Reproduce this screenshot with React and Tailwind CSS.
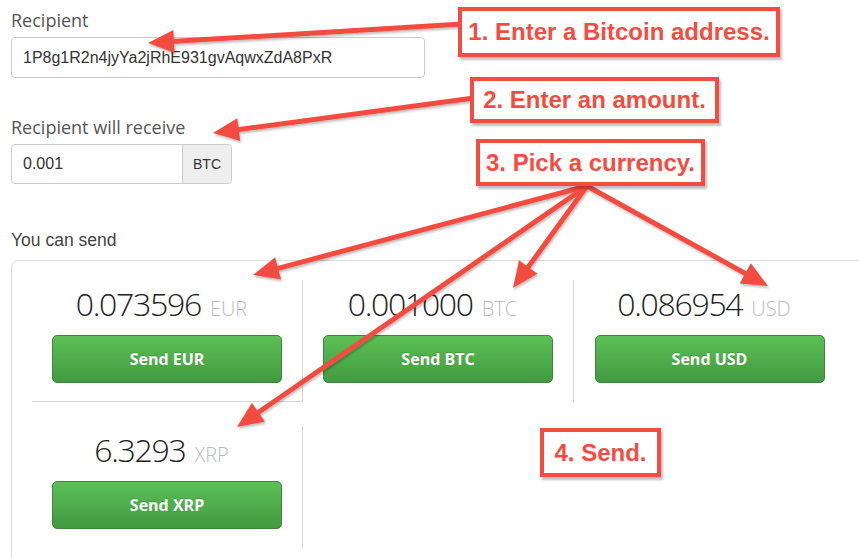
import React from 'react';

const RED = '#f44c40';

const cells = [
  { amount: '0.073596', cur: 'EUR', right: true, bottom: true },
  { amount: '0.001000', cur: 'BTC', right: true },
  { amount: '0.086954', cur: 'USD' },
  { amount: '6.3293', cur: 'XRP', right: true },
];

// arrow line + head, from start point to tip
const Arrow = ({ from, to }) => {
  const dx = to[0] - from[0];
  const dy = to[1] - from[1];
  const len = Math.sqrt(dx * dx + dy * dy);
  const ux = dx / len;
  const uy = dy / len;
  const nx = -uy;
  const ny = ux;
  const bx = to[0] - ux * 26;
  const by = to[1] - uy * 26;
  const pts = [
    [to[0], to[1]],
    [bx + nx * 11.5, by + ny * 11.5],
    [bx - nx * 11.5, by - ny * 11.5],
  ];
  return (
    <g>
      <line x1={from[0]} y1={from[1]} x2={bx + ux * 3} y2={by + uy * 3} stroke={RED} strokeWidth="5" />
      <polygon points={pts.map((p) => p.join(',')).join(' ')} fill={RED} />
    </g>
  );
};

const Callout = ({ className, children }) => (
  <div
    className={`absolute flex items-center justify-center bg-white border-4 border-[#f44c40] shadow-[2px_3px_2px_rgba(0,0,0,0.25)] text-[#f44c40] font-bold text-[24px] leading-none ${className}`}
    style={{ fontFamily: '"Liberation Sans", Arial, sans-serif' }}
  >
    {children}
  </div>
);

const Cell = ({ amount, cur, right, bottom }) => (
  <div
    className={`w-[271px] h-[122px] px-5 pt-[4px] flex flex-col items-center ${right ? 'border-r border-[#d4d4d4]' : ''} ${bottom ? 'border-b border-[#d4d4d4]' : ''}`}
  >
    <div className="h-[40px] leading-[40px] pr-[11px] whitespace-nowrap" style={{ fontFamily: '"Open Sans", sans-serif' }}>
      <span className="text-[32px] font-light tracking-[-1.3px] text-[#222]">{amount}</span>
      <span className="ml-[9px] text-[20px] font-light text-[#bbbbbb]">{cur}</span>
    </div>
    <button
      className="mt-[11px] w-[230px] h-[48px] rounded-[5px] border border-[#3d853a] bg-gradient-to-b from-[#5cc056] to-[#429a40] text-white font-bold text-[16px] [text-shadow:0_-1px_0_rgba(0,0,0,0.15)]"
      style={{ fontFamily: '"Open Sans", sans-serif' }}
    >
      Send {cur}
    </button>
  </div>
);

export default function App() {
  return (
    <div className="relative w-[859px] h-[558px] overflow-hidden bg-white">
      <div className="pl-[11px] pt-[8px]">
        <div className="text-[18px] leading-6 text-[#555]" style={{ fontFamily: '"Open Sans", sans-serif' }}>
          Recipient
        </div>
        <div
          className="mt-[5px] w-[414px] h-[41px] border border-[#cccccc] rounded-[4px] flex items-center pl-[11px] text-[16px] text-[#333]"
          style={{ fontFamily: '"Liberation Sans", Arial, sans-serif' }}
        >
          1P8g1R2n4jyYa2jRhE931gvAqwxZdA8PxR
        </div>

        <div className="mt-[37px] text-[18px] leading-6 text-[#555]" style={{ fontFamily: '"Open Sans", sans-serif' }}>
          Recipient will receive
        </div>
        <div
          className="mt-[5px] w-[221px] h-[40px] border border-[#cccccc] rounded-[4px] flex overflow-hidden text-[#333]"
          style={{ fontFamily: '"Liberation Sans", Arial, sans-serif' }}
        >
          <div className="flex-1 flex items-center pl-[11px] text-[16px]">0.001</div>
          <div className="w-[49px] flex items-center justify-center bg-[#eeeeee] border-l border-[#cccccc] text-[14px]">
            BTC
          </div>
        </div>

        <div
          className="mt-[44px] text-[17.5px] leading-6 text-[#444]"
          style={{ fontFamily: '"Liberation Sans", Arial, sans-serif' }}
        >
          You can send
        </div>
        <div className="mt-[8px] w-[880px] h-[320px] border border-[#dddddd] rounded-tl-[7px] pl-5 pt-[19px]">
          <div className="flex flex-wrap w-[813px] gap-y-[24px]">
            {cells.map((c) => (
              <Cell key={c.cur} {...c} />
            ))}
          </div>
        </div>
      </div>

      <svg className="absolute inset-0 pointer-events-none" width="859" height="558">
        <defs>
          <filter id="sh" x="-10%" y="-10%" width="120%" height="120%">
            <feDropShadow dx="1" dy="2" stdDeviation="1" floodColor="#000" floodOpacity="0.25" />
          </filter>
        </defs>
        <g filter="url(#sh)">
          <Arrow from={[462, 24]} to={[148, 43]} />
          <Arrow from={[474, 98]} to={[213, 133]} />
          <Arrow from={[587, 186]} to={[253, 275]} />
          <Arrow from={[587, 186]} to={[513, 288]} />
          <Arrow from={[587, 186]} to={[768, 286]} />
          <Arrow from={[587, 186]} to={[237, 427]} />
        </g>
      </svg>

      <Callout className="left-[458px] top-[7px] w-[322px] h-[50px]">1. Enter a Bitcoin address.</Callout>
      <Callout className="left-[470px] top-[77px] w-[249px] h-[46px]">2. Enter an amount.</Callout>
      <Callout className="left-[476px] top-[139px] w-[229px] h-[47px]">3. Pick a currency.</Callout>
      <Callout className="left-[540px] top-[428px] w-[121px] h-[49px]">4. Send.</Callout>
    </div>
  );
}
